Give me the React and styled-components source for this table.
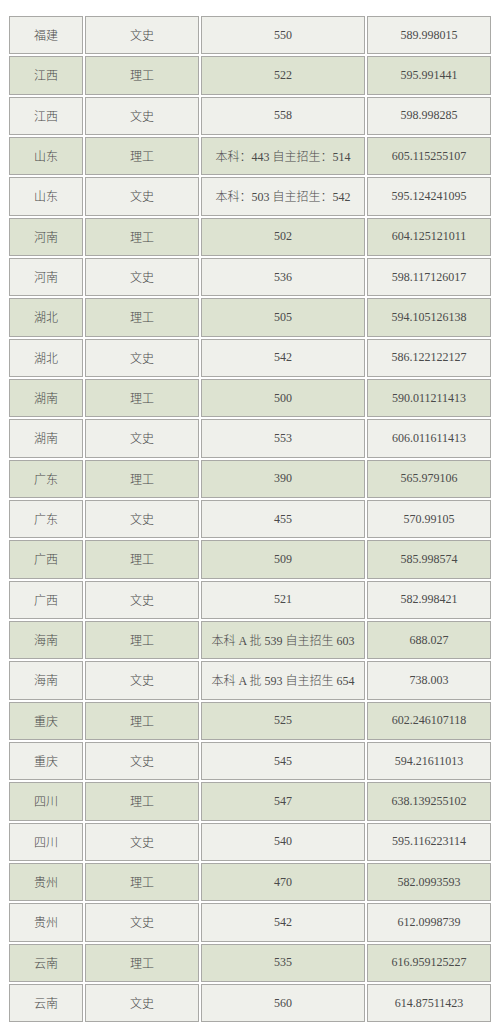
import React from "react";
import styled, { createGlobalStyle } from "styled-components";

const GlobalStyle = createGlobalStyle`
  html, body {
    margin: 0;
    padding: 0;
    background: #ffffff;
    overflow: hidden;
  }
  body {
    font-family: "Liberation Serif", "Noto Sans CJK SC", serif;
  }
`;

// province, track, score line, reference score
const rows = [
  ["福建", "文史", "550", "589.998015"],
  ["江西", "理工", "522", "595.991441"],
  ["江西", "文史", "558", "598.998285"],
  ["山东", "理工", "本科：443 自主招生：514", "605.115255107"],
  ["山东", "文史", "本科：503 自主招生：542", "595.124241095"],
  ["河南", "理工", "502", "604.125121011"],
  ["河南", "文史", "536", "598.117126017"],
  ["湖北", "理工", "505", "594.105126138"],
  ["湖北", "文史", "542", "586.122122127"],
  ["湖南", "理工", "500", "590.011211413"],
  ["湖南", "文史", "553", "606.011611413"],
  ["广东", "理工", "390", "565.979106"],
  ["广东", "文史", "455", "570.99105"],
  ["广西", "理工", "509", "585.998574"],
  ["广西", "文史", "521", "582.998421"],
  ["海南", "理工", "本科 A 批 539 自主招生 603", "688.027"],
  ["海南", "文史", "本科 A 批 593 自主招生 654", "738.003"],
  ["重庆", "理工", "525", "602.246107118"],
  ["重庆", "文史", "545", "594.21611013"],
  ["四川", "理工", "547", "638.139255102"],
  ["四川", "文史", "540", "595.116223114"],
  ["贵州", "理工", "470", "582.0993593"],
  ["贵州", "文史", "542", "612.0998739"],
  ["云南", "理工", "535", "616.959125227"],
  ["云南", "文史", "560", "614.87511423"],
];

function App() {
  return (
    <Page>
      <GlobalStyle />
      <Table>
        {rows.map((row, i) => {
          const green = row[1] === "理工";
          return row.map((text, j) => (
            <Cell key={i + "-" + j} $green={green}>
              {text}
            </Cell>
          ));
        })}
      </Table>
    </Page>
  );
}

const Page = styled.div`
  width: 500px;
  height: 1022px;
  padding: 16px 0 0 9px;
  box-sizing: border-box;
  overflow: hidden;
`;

const Table = styled.div`
  display: grid;
  grid-template-columns: 74px 114px 164px 124px;
  grid-auto-rows: 38.33px;
  gap: 2px;
`;

const Cell = styled.div`
  box-sizing: border-box;
  display: flex;
  align-items: center;
  justify-content: center;
  border: 1px solid #a9a9a6;
  background: ${(p) => (p.$green ? "#dde3d1" : "#eff0eb")};
  color: #4a4a4a;
  font-size: 12px;
  font-weight: 300;
  white-space: nowrap;
  font-family: "Liberation Serif", "Noto Sans CJK SC", serif;
`;

export default App;
